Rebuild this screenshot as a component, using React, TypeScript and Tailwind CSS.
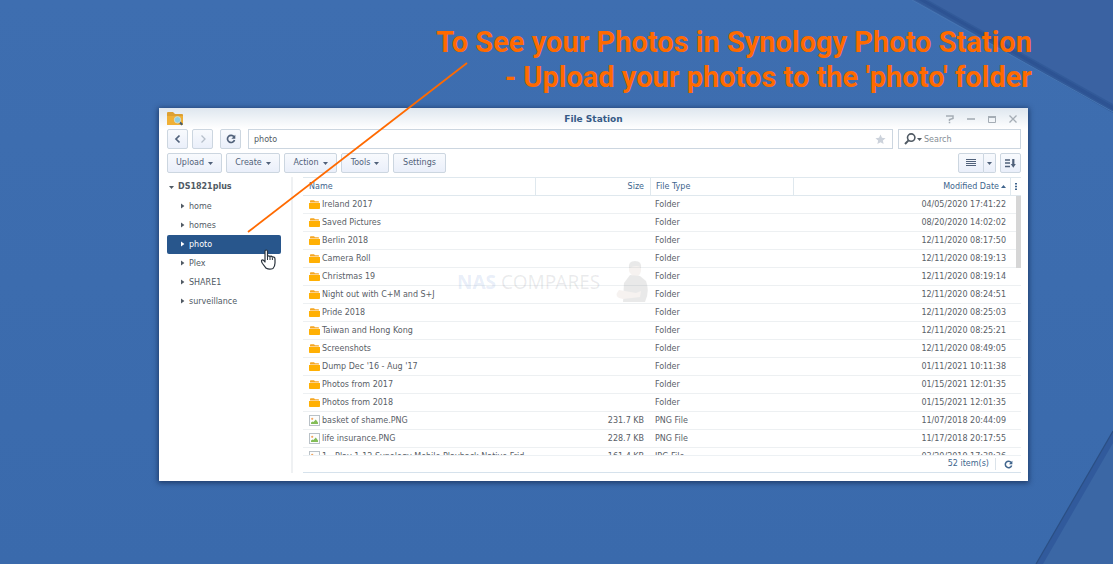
import React from "react";

type Entry = { name: string; size?: string; type: string; date: string };

const entries: Entry[] = [
  { name: "Ireland 2017", type: "Folder", date: "04/05/2020 17:41:22" },
  { name: "Saved Pictures", type: "Folder", date: "08/20/2020 14:02:02" },
  { name: "Berlin 2018", type: "Folder", date: "12/11/2020 08:17:50" },
  { name: "Camera Roll", type: "Folder", date: "12/11/2020 08:19:13" },
  { name: "Christmas 19", type: "Folder", date: "12/11/2020 08:19:14" },
  { name: "Night out with C+M and S+J", type: "Folder", date: "12/11/2020 08:24:51" },
  { name: "Pride 2018", type: "Folder", date: "12/11/2020 08:25:03" },
  { name: "Taiwan and Hong Kong", type: "Folder", date: "12/11/2020 08:25:21" },
  { name: "Screenshots", type: "Folder", date: "12/11/2020 08:49:05" },
  { name: "Dump Dec '16 - Aug '17", type: "Folder", date: "01/11/2021 10:11:38" },
  { name: "Photos from 2017", type: "Folder", date: "01/15/2021 12:01:35" },
  { name: "Photos from 2018", type: "Folder", date: "01/15/2021 12:01:35" },
  { name: "basket of shame.PNG", size: "231.7 KB", type: "PNG File", date: "11/07/2018 20:44:09" },
  { name: "life insurance.PNG", size: "228.7 KB", type: "PNG File", date: "11/17/2018 20:17:55" },
  { name: "1 - Play 1-12 Synology Mobile Playback Native Frid", size: "161.4 KB", type: "JPG File", date: "03/20/2019 17:38:36" },
];

const folders = ["home", "homes", "photo", "Plex", "SHARE1", "surveillance"];

const buttonLook =
  "flex h-5 items-center justify-center rounded-xs border border-[#ccd6e0] bg-linear-to-b from-[#f8fafd] to-[#eaeffa] text-[#50617a]";

function FolderIcon() {
  return (
    <svg width="11" height="11" viewBox="0 0 11 11" className="shrink-0" aria-hidden="true">
      <path d="M1 3.4V2Q1 1.2 1.8 1.2H5L6 2.2H9.4Q10 2.2 10 2.8V3.4Z" fill="#f5a623" />
      <path d="M0 4H11V9.2Q11 10 10.2 10H.8Q0 10 0 9.2Z" fill="#ffb004" />
    </svg>
  );
}

function ImageIcon() {
  return (
    <svg width="11" height="11" viewBox="0 0 11 11" className="shrink-0" aria-hidden="true">
      <rect x=".5" y=".5" width="10" height="10" fill="#fcfdfd" stroke="#b9c1c7" />
      <circle cx="3.2" cy="3.8" r="1.1" fill="#f2a662" />
      <path d="M2 9V7.5L3.5 6.5L4.5 7L6.8 4.5L9 7.5V9Z" fill="#83bd57" />
    </svg>
  );
}

function Reload({ size }: { size: number }) {
  return (
    <svg width={size} height={size} viewBox="0 0 10 10" fill="none" aria-hidden="true">
      <path d="M8 2.8A3.6 3.6 0 1 0 8.5 6" stroke="currentColor" strokeWidth="1.7" />
      <path d="M9.3 .8V4.7H5.4Z" fill="currentColor" />
    </svg>
  );
}

function Caret() {
  return (
    <svg width="5" height="5" viewBox="0 0 5 5" aria-hidden="true">
      <path d="M0 1H5L2.5 4Z" fill="currentColor" />
    </svg>
  );
}

function Wallpaper() {
  return (
    <div className="absolute inset-0 -z-10 bg-linear-to-b from-[#3e6eb0] to-[#3a6aac]" aria-hidden="true">
      <svg className="absolute top-0 right-0" width="201" height="114" viewBox="0 0 201 114">
        <path d="M0 0H201V111Z" fill="#3a62a2" />
        <path d="M3 0H16L201 104V113Z" fill="#325a99" />
        <path d="M7 0H13L201 106V110Z" fill="#2d5393" />
        <path d="M0 0L201 112" stroke="#4776b3" strokeWidth="1" />
      </svg>
      <svg className="absolute right-0 bottom-0" width="78" height="134" viewBox="0 0 78 134">
        <path d="M1 134L78 1V134Z" fill="#3b67a5" />
        <path d="M1 134L78 1V13L8 134Z" fill="#315a9c" />
        <path d="M1 134L78 1" stroke="#2b4f84" strokeWidth="1.2" />
      </svg>
    </div>
  );
}

function TitleBar() {
  return (
    <header className="grid h-[21px] grid-cols-[1fr_auto_1fr] items-center bg-linear-to-b from-[#dfe7ef] to-white px-2">
      <svg width="17" height="15" viewBox="0 0 17 15" aria-hidden="true">
        <path d="M0 2Q0 1 1 1H6L8 3H15Q16 3 16 4V13Q16 14 15 14H1Q0 14 0 13Z" fill="#dda032" />
        <path d="M0 5H16V13Q16 14 15 14H1Q0 14 0 13Z" fill="#f0b036" />
        <path d="M12.5 11L15.3 13.8" stroke="#465c6d" strokeWidth="2" />
        <circle cx="10.5" cy="8.8" r="3.2" fill="#8fcfe4" stroke="#d3dccb" />
      </svg>
      <h2 className="text-[9px] leading-3 font-bold text-[#365a86]">File Station</h2>
      <div className="flex items-center justify-end gap-[11px] pr-0.5 text-[#a5adb5]">
        <button aria-label="Help">
          <svg width="10" height="10" viewBox="0 0 10 10" fill="none" stroke="currentColor" strokeWidth="1.5">
            <path d="M1 2H8V4.5L4.5 5.5V7M4.5 7.8V9.2" />
          </svg>
        </button>
        <button aria-label="Minimize">
          <svg width="10" height="10" viewBox="0 0 10 10" fill="none" stroke="currentColor" strokeWidth="1.6">
            <path d="M1 5H9" />
          </svg>
        </button>
        <button aria-label="Maximize">
          <svg width="10" height="10" viewBox="0 0 10 10" fill="none" stroke="currentColor">
            <path d="M1.5 2V8.5H8.5V2" />
            <path d="M1 3H9" strokeWidth="2" />
          </svg>
        </button>
        <button aria-label="Close">
          <svg width="10" height="10" viewBox="0 0 10 10" fill="none" stroke="currentColor" strokeWidth="1.3">
            <path d="M1.5 1.5L8.5 8.5M8.5 1.5L1.5 8.5" />
          </svg>
        </button>
      </div>
    </header>
  );
}

function NavigationBar() {
  return (
    <div className="flex h-5 items-center pr-[7px] pl-2">
      <div className="flex gap-1">
        <button aria-label="Back" className={`${buttonLook} w-[21px]`}>
          <svg width="8" height="10" viewBox="0 0 8 10" fill="none" stroke="currentColor" strokeWidth="1.7">
            <path d="M5.5 1.5L2 5L5.5 8.5" />
          </svg>
        </button>
        <button aria-label="Forward" className={`${buttonLook} w-[21px]`}>
          <svg width="8" height="10" viewBox="0 0 8 10" fill="none" stroke="#b6bfca" strokeWidth="1.3">
            <path d="M2.5 1.5L6 5L2.5 8.5" />
          </svg>
        </button>
      </div>
      <button aria-label="Refresh" className={`${buttonLook} ml-[7px] w-[21px]`}>
        <Reload size={10} />
      </button>
      <div className="ml-[7px] flex h-5 flex-1 items-center border border-[#ccd6e0] bg-white">
        <input aria-label="Path" defaultValue="photo" className="h-full min-w-0 flex-1 px-[5px] text-[8px] text-[#505a64] outline-none" />
        <button aria-label="Add to favorites" className="pr-1.5">
          <svg width="11" height="11" viewBox="0 0 12 12" fill="#ccd2db">
            <path d="M6 .6L7.6 4.2L11.5 4.6L8.6 7.2L9.4 11L6 9L2.6 11L3.4 7.2L.5 4.6L4.4 4.2Z" />
          </svg>
        </button>
      </div>
      <div className="ml-[5px] flex h-5 w-[123px] items-center border border-[#ccd6e0] bg-white pl-[5px] text-[#505a64]">
        <button aria-label="Search options" className="flex items-center gap-px">
          <svg width="12" height="12" viewBox="0 0 12 12" fill="none" stroke="currentColor">
            <circle cx="7.2" cy="4.6" r="3.7" strokeWidth="1.6" />
            <path d="M4.5 7.4L1 11" strokeWidth="2" />
          </svg>
          <Caret />
        </button>
        <input type="search" aria-label="Search" placeholder="Search" className="h-full min-w-0 flex-1 px-0.5 text-[8px] outline-none placeholder:text-[#858d95]" />
      </div>
    </div>
  );
}

function Toolbar() {
  return (
    <div className="mt-1 flex h-5 justify-between pr-[7px] pl-2 text-[8px]">
      <div className="flex gap-1">
        <button className={`${buttonLook} w-[55px] gap-1`}>Upload <Caret /></button>
        <button className={`${buttonLook} w-[54px] gap-1`}>Create <Caret /></button>
        <button className={`${buttonLook} w-[53px] gap-1`}>Action <Caret /></button>
        <button className={`${buttonLook} w-12 gap-1`}>Tools <Caret /></button>
        <button className={`${buttonLook} w-[53px]`}>Settings</button>
      </div>
      <div className="flex gap-1">
        <div className="flex">
          <button aria-label="List view" className={`${buttonLook} w-[26px] rounded-r-none`}>
            <svg width="10" height="8" viewBox="0 0 10 8" stroke="currentColor" strokeWidth="1">
              <path d="M0 .5H10M0 2.5H10M0 4.5H10M0 6.5H10" shapeRendering="crispEdges" />
            </svg>
          </button>
          <button aria-label="View options" className={`${buttonLook} w-3 rounded-l-none border-l-0`}>
            <Caret />
          </button>
        </div>
        <button aria-label="Sort" className={`${buttonLook} w-[21px]`}>
          <svg width="11" height="9" viewBox="0 0 11 9" fill="none" stroke="currentColor">
            <path d="M0 1H5M0 4H5M0 7.5H5" strokeWidth="1.4" />
            <path d="M8.3 0V6" strokeWidth="2.2" />
            <path d="M5.8 5H10.8L8.3 8.8Z" fill="currentColor" stroke="none" />
          </svg>
        </button>
      </div>
    </div>
  );
}

function Sidebar() {
  return (
    <nav aria-label="Folders" className="relative w-[134px] shrink-0 border-r-2 border-[#eff1f3] pr-[10px] pl-2 text-[8px] text-[#505a64]">
      <button className="flex h-5 items-center gap-1 pl-0.5 font-bold">
        <Caret />
        DS1821plus
      </button>
      <ul>
        {folders.map((folder) => (
          <li key={folder}>
            <button
              aria-current={folder === "photo" ? "page" : undefined}
              className="flex h-[19px] w-full items-center gap-1 rounded-xs pl-3.5 aria-[current=page]:bg-[#28568c] aria-[current=page]:text-white"
            >
              <svg width="4" height="7" viewBox="0 0 4 7" aria-hidden="true">
                <path d="M0 .5L3.4 3L0 5.5Z" fill="currentColor" />
              </svg>
              {folder}
            </button>
          </li>
        ))}
      </ul>
      <svg className="absolute top-[72px] left-[101px]" width="17" height="22" viewBox="0 0 17 22" aria-hidden="true">
        <path
          d="M5 13V2.2Q5 1 6.2 1Q7.5 1 7.5 2.3V7.5Q8.3 6.1 10 7.5Q11 6.5 12.3 8Q14.8 7.6 15 10V14Q15 17 13 19.5Q9.5 21 6.2 19.3L2.5 14.5Q.8 11.8 2 11Q3.2 10.5 5 13Z"
          fill="white"
          stroke="#29323c"
          strokeWidth="1.2"
          strokeLinejoin="round"
        />
        <path d="M7.5 8V11M10 8V11M12.4 8.5V11" stroke="#29323c" />
      </svg>
    </nav>
  );
}

function FileList() {
  return (
    <section className="mr-[7px] ml-[10px] min-w-0 flex-1 text-[8px]">
      <div className="relative h-[279px] overflow-hidden border-b border-[#edf1f4]">
        <table className="w-full table-fixed border-separate border-spacing-0 whitespace-nowrap text-[#596067]">
          <colgroup>
            <col className="w-[233px]" />
            <col className="w-[115px]" />
            <col className="w-[143px]" />
            <col />
            <col className="w-[10px]" />
          </colgroup>
          <thead>
            <tr className="h-[19px] text-[#40658d] *:border-y *:border-[#dfe8ee] *:p-0 *:font-normal">
              <th className="border-r pl-1.5! text-left">Name</th>
              <th className="border-r pr-1.5! text-right">Size</th>
              <th className="border-r pl-[5px]! text-left">File Type</th>
              <th className="border-r pr-1! text-right" aria-sort="ascending">
                <span className="inline-flex items-center gap-0.5">
                  Modified Date
                  <svg width="5" height="3" viewBox="0 0 5 3" aria-hidden="true">
                    <path d="M0 3H5L2.5 0Z" fill="currentColor" />
                  </svg>
                </span>
              </th>
              <th>
                <button aria-label="Choose columns" className="flex w-full justify-center">
                  <svg width="2" height="7" viewBox="0 0 2 7" fill="currentColor">
                    <path d="M0 0H2V1.5H0ZM0 2.8H2V4.3H0ZM0 5.5H2V7H0Z" />
                  </svg>
                </button>
              </th>
            </tr>
          </thead>
          <tbody>
            {entries.map((entry) => (
              <tr key={entry.name} className="h-[18px] *:border-b *:border-[#edf0f2] *:p-0">
                <td className="pl-1.5!">
                  <span className="flex items-center gap-0.5">
                    {entry.type === "Folder" ? <FolderIcon /> : <ImageIcon />}
                    {entry.name}
                  </span>
                </td>
                <td className="pr-[7px]! text-right">{entry.size}</td>
                <td className="pl-1!">{entry.type}</td>
                <td className="pr-[5px]! text-right">{entry.date}</td>
                <td />
              </tr>
            ))}
          </tbody>
        </table>
        <div className="absolute top-[19px] right-0 h-[72px] w-[5px] bg-[#d6d6d6]" />
        <div className="pointer-events-none absolute top-[84px] left-[154px] flex items-center gap-4" aria-hidden="true">
          <p className="font-['Noto_Sans',sans-serif] text-[19px] leading-7 text-[#565d68]/12">
            <strong className="text-[#5c82cf]/15">NAS</strong> COMPARES
          </p>
          <svg width="32" height="42" viewBox="0 0 32 42" opacity=".11">
            <path d="M13 10Q12 1 19 1Q26 1 25 10Q24 15 20 16Q15 15 13 10Z" fill="#b58f7c" />
            <path d="M13 7Q12 0 19 0Q26 0 25 7Q22 3 13 7Z" fill="#454545" />
            <path d="M14 14L24 15L30 20Q34 30 29 41H7L8 22Z" fill="#454545" />
            <path d="M3 29L20 32L25 30L24 36L7 38Q-1 37 1 32Z" fill="#b58f7c" />
          </svg>
        </div>
      </div>
      <footer className="flex h-[17px] items-center justify-end border-b border-[#d6e2ec] pr-2 text-[#40658d]">
        <span className="border-r border-[#dbe3ea] pr-1.5 leading-3">52 item(s)</span>
        <button aria-label="Refresh list" className="ml-2">
          <Reload size={9} />
        </button>
      </footer>
    </section>
  );
}

export default function App() {
  return (
    <div className="relative isolate flex min-h-screen flex-col overflow-hidden pr-[85px] pl-[159px] font-['DejaVu_Sans',sans-serif]">
      <Wallpaper />
      <h1 className="-mr-1 pt-[25px] pb-[13px] text-right font-['Roboto',sans-serif] text-[29px] leading-[35px] font-bold whitespace-nowrap text-[#ff6a00]">
        To See your Photos in Synology Photo Station
        <br />- Upload your photos to the 'photo' folder
      </h1>
      <main className="bg-white pb-2 shadow-[0_1px_5px_1px_rgba(15,35,70,0.65)]">
        <TitleBar />
        <NavigationBar />
        <Toolbar />
        <div className="mt-1 flex">
          <Sidebar />
          <FileList />
        </div>
      </main>
      <svg className="pointer-events-none absolute top-[62px] left-[246px]" width="222" height="172" viewBox="0 0 222 172" aria-hidden="true">
        <path d="M221 1L2 170" stroke="#ff6a00" strokeWidth="1.8" />
      </svg>
    </div>
  );
}
